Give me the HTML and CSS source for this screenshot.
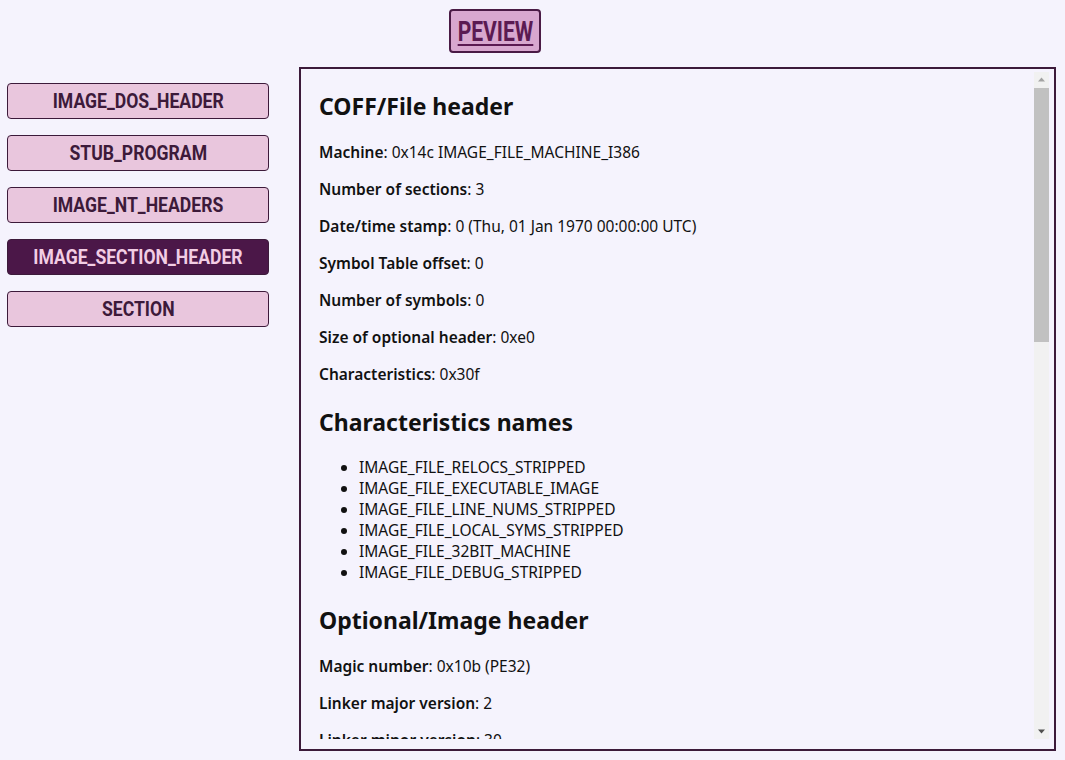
FILE: index.html
```html
<!DOCTYPE html>
<html>
<head>
<meta charset="utf-8">
<link rel="stylesheet" href="styles.css">
</head>
<body>
<header class="top">
  <button class="peview"><span class="cond">PEVIEW</span></button>
</header>
<main class="main">
  <nav class="nav">
    <button class="nav-btn"><span class="cond">IMAGE_DOS_HEADER</span></button>
    <button class="nav-btn"><span class="cond">STUB_PROGRAM</span></button>
    <button class="nav-btn"><span class="cond">IMAGE_NT_HEADERS</span></button>
    <button class="nav-btn active"><span class="cond">IMAGE_SECTION_HEADER</span></button>
    <button class="nav-btn"><span class="cond">SECTION</span></button>
  </nav>
  <section class="panel">
    <div class="scroller">
      <div class="content">
        <h2>COFF/File header</h2>
        <p><b>Machine</b>: 0x14c IMAGE_FILE_MACHINE_I386</p>
        <p><b>Number of sections</b>: 3</p>
        <p><b>Date/time stamp</b>: 0 (Thu, 01 Jan 1970 00:00:00 UTC)</p>
        <p><b>Symbol Table offset</b>: 0</p>
        <p><b>Number of symbols</b>: 0</p>
        <p><b>Size of optional header</b>: 0xe0</p>
        <p><b>Characteristics</b>: 0x30f</p>
        <h2>Characteristics names</h2>
        <ul>
          <li>IMAGE_FILE_RELOCS_STRIPPED</li>
          <li>IMAGE_FILE_EXECUTABLE_IMAGE</li>
          <li>IMAGE_FILE_LINE_NUMS_STRIPPED</li>
          <li>IMAGE_FILE_LOCAL_SYMS_STRIPPED</li>
          <li>IMAGE_FILE_32BIT_MACHINE</li>
          <li>IMAGE_FILE_DEBUG_STRIPPED</li>
        </ul>
        <h2>Optional/Image header</h2>
        <p><b>Magic number</b>: 0x10b (PE32)</p>
        <p><b>Linker major version</b>: 2</p>
        <p><b>Linker minor version</b>: 30</p>
        <p><b>Size of code</b>: 0x600</p>
      </div>
    </div>
    <div class="scrollbar">
      <div class="sb-arrow"><svg width="15" height="15" viewBox="0 0 15 15"><path d="M4 9.5 L7.5 5.5 L11 9.5 Z" fill="#a3a3a3"/></svg></div>
      <div class="sb-track"><div class="sb-thumb"></div></div>
      <div class="sb-arrow"><svg width="15" height="15" viewBox="0 0 15 15"><path d="M4 5.5 L7.5 9.5 L11 5.5 Z" fill="#505050"/></svg></div>
    </div>
  </section>
</main>
</body>
</html>
```
FILE: styles.css
```css
html, body {
  margin: 0;
  padding: 0;
  background: #f5f3fd;
}
body {
  font-family: "Noto Sans", "Open Sans", sans-serif;
  color: #111;
}
.top {
  height: 67px;
  padding-left: 449px;
  padding-top: 9px;
  box-sizing: border-box;
}
.cond {
  display: inline-block;
  white-space: nowrap;
}
.peview {
  width: 92px;
  height: 44px;
  background: #d8a7cf;
  border: 2px solid #4a1a45;
  border-radius: 4px;
  color: #5b1a52;
  font-family: Roboto, sans-serif;
  font-weight: 700;
  font-size: 27px;
  padding: 0;
  display: flex;
  align-items: center;
  justify-content: center;
}
.peview .cond {
  transform: scaleX(0.78);
  text-decoration: underline;
  text-decoration-thickness: 2px;
  text-underline-offset: 3px;
  margin-top: 2px;
}
.main {
  display: flex;
  align-items: flex-start;
}
.nav {
  display: flex;
  flex-direction: column;
  gap: 16px;
  width: 262px;
  margin-left: 7px;
  margin-top: 16px;
}
.nav-btn {
  height: 36px;
  background: #e9c6dd;
  border: 1px solid #3c1a3a;
  border-radius: 4px;
  color: #3c1a3a;
  font-family: Roboto, sans-serif;
  font-weight: 700;
  font-size: 20px;
  padding: 0;
  display: flex;
  align-items: center;
  justify-content: center;
  overflow: hidden;
}
.nav-btn .cond {
  transform: scaleX(0.88);
}
.nav-btn.active {
  background: #4b1748;
  color: #f2cde4;
}
.panel {
  margin-left: 30px;
  width: 757px;
  height: 684px;
  box-sizing: border-box;
  border: 2px solid #3c1a3a;
  padding: 3px 5px 10px 4px;
  display: flex;
}
.scroller {
  flex: 1;
  overflow: hidden;
}
.content {
  padding: 0 14px;
}
.content h2 {
  font-size: 23px;
  font-weight: 700;
  margin: 17px 0 18px;
  line-height: 34px;
}
.content h2 ~ h2 {
  margin-top: 20px;
}
.content p {
  font-size: 15.5px;
  line-height: 22px;
  margin: 15px 0;
}
.content b {
  font-weight: 600;
}
.content ul {
  font-size: 15.5px;
  line-height: 21px;
  margin: 15px 0;
  padding-left: 40px;
}
.scrollbar {
  width: 15px;
  background: #f1f1f1;
  display: flex;
  flex-direction: column;
}
.sb-arrow {
  height: 15px;
  display: flex;
}
.sb-track {
  flex: 1;
  padding-top: 1px;
}
.sb-thumb {
  height: 254px;
  background: #c1c1c1;
}
```
